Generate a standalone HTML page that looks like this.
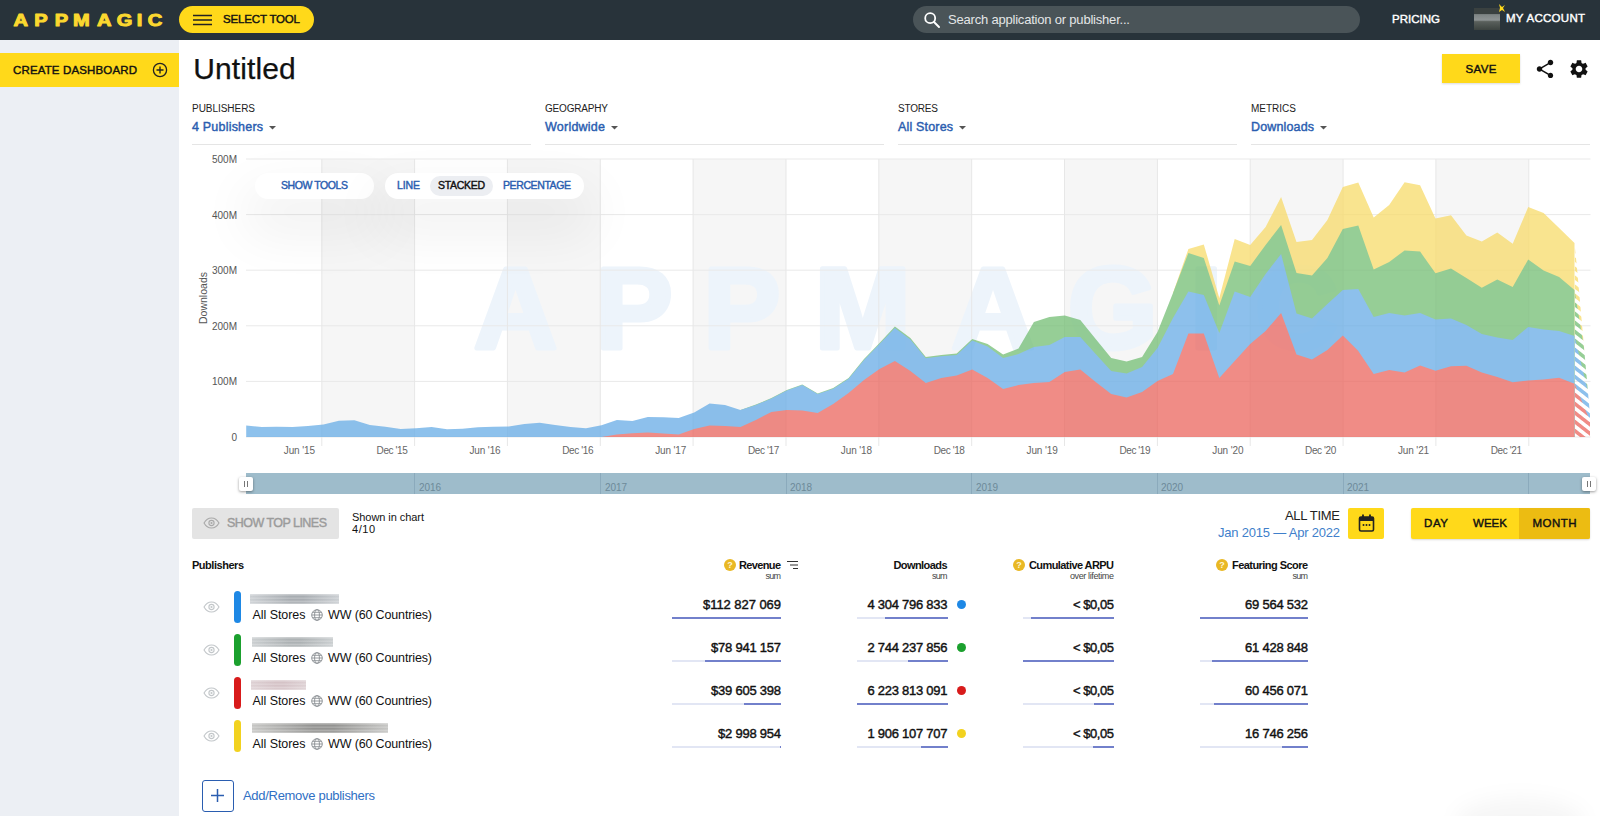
<!DOCTYPE html>
<html lang="en"><head><meta charset="utf-8"><title>AppMagic - Untitled dashboard</title>
<style>
html,body{margin:0;padding:0}
body{width:1600px;height:816px;position:relative;overflow:hidden;background:#fff;font-family:"Liberation Sans",Arial,sans-serif;color:#111}
.t{position:absolute;white-space:nowrap}
.abs{position:absolute}
header{position:absolute;left:0;top:0;width:1600px;height:39.500px;background:#28333a}
aside{position:absolute;left:0;top:39.500px;width:179px;height:776.500px;background:#eceff4}
svg{position:absolute;overflow:visible}
</style></head>
<body>
<header></header>
<svg style="left:0;top:0" width="180" height="40" viewBox="0 0 180 40"><text transform="scale(1.19 1)" y="26.100" x="11.43 28.78 46.09 61.34 81.51 98.06 114.91 124.20" font-family="Liberation Sans, Arial, sans-serif" font-weight="700" font-size="16.9" fill="#fbd82f" stroke="#fbd82f" stroke-width="1" stroke-linejoin="round">APPMAGIC</text></svg>
<div class="abs" style="left:179px;top:6px;width:135px;height:27px;border-radius:14px;background:#ffd91a"></div>
<svg style="left:193px;top:14px" width="20" height="12" viewBox="0 0 20 12"><path d="M0 1.5h19M0 6h19M0 10.5h19" stroke="#222" stroke-width="1.6" fill="none"/></svg>
<div class="t" style="font-size:11.5px;line-height:15px;top:12.10px;color:#111;letter-spacing:-0.162px;left:223.00px;-webkit-text-stroke:0.42px #111;">SELECT TOOL</div>
<div class="abs" style="left:912.500px;top:5.500px;width:447.500px;height:27.500px;border-radius:14px;background:#4a5458"></div>
<svg style="left:923px;top:11px" width="18" height="18" viewBox="0 0 18 18"><circle cx="7.2" cy="7.2" r="5" stroke="#fff" stroke-width="1.8" fill="none"/><path d="M11 11l5 5" stroke="#fff" stroke-width="2" stroke-linecap="round"/></svg>
<div class="t" style="font-size:13px;line-height:17px;top:11.00px;color:#e4e6e7;letter-spacing:-0.201px;left:948.00px;">Search application or publisher...</div>
<div class="t" style="font-size:11.5px;line-height:15px;top:12.00px;color:#fff;letter-spacing:0.013px;left:1392.00px;-webkit-text-stroke:0.42px #fff;">PRICING</div>
<div class="abs" style="left:1474px;top:8px;width:26px;height:22px;background:linear-gradient(#3a4140 0,#3a4140 25%,#7d8484 30%,#8e9494 55%,#5a605c 62%,#3c4340 100%)"></div>
<svg style="left:1498px;top:4px" width="8" height="9" viewBox="0 0 8 9"><path d="M1 0l3 3 3-2-2 3 2 4-3-2-3 2 1-4z" fill="#ffd91a"/></svg>
<div class="t" style="font-size:11.5px;line-height:15px;top:11.00px;color:#fff;letter-spacing:0.282px;left:1506.00px;-webkit-text-stroke:0.42px #fff;">MY ACCOUNT</div>
<aside></aside>
<div class="abs" style="left:0;top:53px;width:179px;height:34px;background:#ffd91a"></div>
<div class="t" style="font-size:11.5px;line-height:15px;top:63.00px;color:#111;letter-spacing:0.144px;left:13.00px;-webkit-text-stroke:0.42px #111;">CREATE DASHBOARD</div>
<svg style="left:152px;top:62px" width="16" height="16" viewBox="0 0 16 16"><circle cx="8" cy="8" r="6.6" stroke="#222" stroke-width="1.3" fill="none"/><path d="M8 4.5v7M4.5 8h7" stroke="#222" stroke-width="1.4"/></svg>
<div class="t" style="font-size:30px;line-height:36px;top:50.50px;color:#111;letter-spacing:0.083px;left:193.30px;-webkit-text-stroke:.25px #111;">Untitled</div>
<div class="abs" style="left:1442px;top:54px;width:78px;height:29px;background:#ffd91a;box-shadow:0 1px 2px rgba(0,0,0,.15)"></div>
<div class="t" style="font-size:11.5px;line-height:15px;top:61.50px;color:#111;letter-spacing:0.390px;left:1481.00px;transform:translateX(-50%);margin-left:0.20px;-webkit-text-stroke:0.42px #111;">SAVE</div>
<svg style="left:1534px;top:58px" width="22" height="22" viewBox="0 0 24 24"><path fill="#111" d="M18 16.08c-.76 0-1.44.3-1.96.77L8.91 12.7c.05-.23.09-.46.09-.7s-.04-.47-.09-.7l7.05-4.11c.54.5 1.25.81 2.04.81 1.66 0 3-1.34 3-3s-1.340-3-3-3-3 1.340-3 3c0 .24.04.47.09.7L8.040 9.810C7.500 9.310 6.790 9 6 9c-1.660 0-3 1.340-3 3s1.340 3 3 3c.79 0 1.500-.31 2.040-.81l7.120 4.160c-.05.210-.08.430-.08.650 0 1.610 1.310 2.920 2.920 2.920s2.920-1.310 2.920-2.920-1.310-2.920-2.920-2.920z"/></svg>
<svg style="left:1568.400px;top:58.400px" width="22" height="22" viewBox="0 0 24 24"><path fill="#111" d="M19.14 12.94c.04-.3.06-.61.06-.94 0-.32-.02-.64-.07-.94l2.030-1.580c.18-.14.23-.41.12-.61l-1.920-3.320c-.12-.22-.37-.29-.59-.22l-2.390.96c-.5-.38-1.030-.7-1.620-.94l-.36-2.540c-.04-.24-.24-.41-.48-.41h-3.840c-.24 0-.43.17-.47.41l-.36 2.540c-.59.24-1.130.57-1.620.94l-2.390-.96c-.22-.08-.47 0-.59.22L2.740 8.870c-.12.210-.08.470.12.610l2.030 1.580c-.05.300-.09.630-.09.940s.02.640.07.940l-2.030 1.580c-.18.140-.23.410-.12.610l1.920 3.320c.12.220.37.290.59.220l2.390-.96c.5.380 1.030.7 1.620.94l.36 2.540c.05.240.24.410.48.410h3.840c.24 0 .44-.17.47-.41l.36-2.540c.59-.24 1.130-.56 1.620-.94l2.390.96c.22.08.47 0 .59-.22l1.920-3.320c.12-.22.07-.47-.12-.61l-2.010-1.580zM12 15.600c-1.980 0-3.600-1.620-3.600-3.600s1.620-3.600 3.600-3.600 3.600 1.620 3.600 3.600-1.620 3.600-3.600 3.600z"/></svg>
<div class="t" style="font-size:10px;line-height:13px;top:102.00px;color:#222;letter-spacing:-0.040px;left:192.00px;">PUBLISHERS</div>
<div class="t" style="font-size:12.5px;line-height:16px;top:118.50px;color:#2a5db0;letter-spacing:0.201px;left:192.00px;-webkit-text-stroke:0.42px #2a5db0;">4 Publishers</div>
<svg style="left:268.5px;top:126.300px" width="7" height="4" viewBox="0 0 7 4"><path d="M0 0h7L3.500 3.600z" fill="#555"/></svg>
<div class="abs" style="left:192px;top:144px;width:339px;height:1px;background:#e5e5e5"></div>
<div class="t" style="font-size:10px;line-height:13px;top:102.00px;color:#222;letter-spacing:-0.182px;left:545.00px;">GEOGRAPHY</div>
<div class="t" style="font-size:12.5px;line-height:16px;top:118.50px;color:#2a5db0;letter-spacing:0.234px;left:545.00px;-webkit-text-stroke:0.42px #2a5db0;">Worldwide</div>
<svg style="left:610.5px;top:126.300px" width="7" height="4" viewBox="0 0 7 4"><path d="M0 0h7L3.500 3.600z" fill="#555"/></svg>
<div class="abs" style="left:545px;top:144px;width:339px;height:1px;background:#e5e5e5"></div>
<div class="t" style="font-size:10px;line-height:13px;top:102.00px;color:#222;letter-spacing:-0.188px;left:898.00px;">STORES</div>
<div class="t" style="font-size:12.5px;line-height:16px;top:118.50px;color:#2a5db0;letter-spacing:0.167px;left:898.00px;-webkit-text-stroke:0.42px #2a5db0;">All Stores</div>
<svg style="left:958.5px;top:126.300px" width="7" height="4" viewBox="0 0 7 4"><path d="M0 0h7L3.500 3.600z" fill="#555"/></svg>
<div class="abs" style="left:898px;top:144px;width:339px;height:1px;background:#e5e5e5"></div>
<div class="t" style="font-size:10px;line-height:13px;top:102.00px;color:#222;letter-spacing:-0.000px;left:1251.00px;">METRICS</div>
<div class="t" style="font-size:12.5px;line-height:16px;top:118.50px;color:#2a5db0;letter-spacing:0.145px;left:1251.00px;-webkit-text-stroke:0.42px #2a5db0;">Downloads</div>
<svg style="left:1319.5px;top:126.300px" width="7" height="4" viewBox="0 0 7 4"><path d="M0 0h7L3.500 3.600z" fill="#555"/></svg>
<div class="abs" style="left:1251px;top:144px;width:339px;height:1px;background:#e5e5e5"></div>
<svg style="left:0;top:0" width="1600" height="816" viewBox="0 0 1600 816">
<defs>
<pattern id="hatch" width="7.1" height="7.1" patternUnits="userSpaceOnUse" patternTransform="rotate(38)"><rect width="7.1" height="3.55" fill="#fff"/></pattern>
<mask id="hm"><path d="M1574.800 243L1590 415V437H1574.800Z" fill="url(#hatch)"/></mask>
</defs>
<rect x="321.8" y="159" width="92.85" height="278" fill="#f6f6f6"/>
<rect x="507.4" y="159" width="92.85" height="278" fill="#f6f6f6"/>
<rect x="693.1" y="159" width="92.85" height="278" fill="#f6f6f6"/>
<rect x="878.8" y="159" width="92.85" height="278" fill="#f6f6f6"/>
<rect x="1064.5" y="159" width="92.85" height="278" fill="#f6f6f6"/>
<rect x="1250.2" y="159" width="92.85" height="278" fill="#f6f6f6"/>
<rect x="1435.9" y="159" width="92.85" height="278" fill="#f6f6f6"/>
<text y="348.100" x="474.1 595.7 703.5 814.7 951.6 1067.9 1190.2 1254.9" font-family="Liberation Sans, Arial, sans-serif" font-weight="700" font-size="115" fill="#edf4fb" stroke="#edf4fb" stroke-width="5" stroke-linejoin="round">APPMAGIC</text>
<path d="M246 159.0H1590.500" stroke="#e9e9e9" stroke-width="1"/>
<path d="M246 214.6H1590.500" stroke="#e9e9e9" stroke-width="1"/>
<path d="M246 270.2H1590.500" stroke="#e9e9e9" stroke-width="1"/>
<path d="M246 325.8H1590.500" stroke="#e9e9e9" stroke-width="1"/>
<path d="M246 381.4H1590.500" stroke="#e9e9e9" stroke-width="1"/>
<path d="M246 437.0H1590.500" stroke="#e9e9e9" stroke-width="1"/>
<path d="M321.8 159V446" stroke="#e7e7e7" stroke-width="1"/>
<path d="M414.6 159V446" stroke="#e7e7e7" stroke-width="1"/>
<path d="M507.4 159V446" stroke="#e7e7e7" stroke-width="1"/>
<path d="M600.3 159V446" stroke="#e7e7e7" stroke-width="1"/>
<path d="M693.1 159V446" stroke="#e7e7e7" stroke-width="1"/>
<path d="M786.0 159V446" stroke="#e7e7e7" stroke-width="1"/>
<path d="M878.8 159V446" stroke="#e7e7e7" stroke-width="1"/>
<path d="M971.7 159V446" stroke="#e7e7e7" stroke-width="1"/>
<path d="M1064.5 159V446" stroke="#e7e7e7" stroke-width="1"/>
<path d="M1157.4 159V446" stroke="#e7e7e7" stroke-width="1"/>
<path d="M1250.2 159V446" stroke="#e7e7e7" stroke-width="1"/>
<path d="M1343.1 159V446" stroke="#e7e7e7" stroke-width="1"/>
<path d="M1435.9 159V446" stroke="#e7e7e7" stroke-width="1"/>
<path d="M1528.8 159V446" stroke="#e7e7e7" stroke-width="1"/>
<g opacity="0.75">
<path d="M1173.0,293.0 L1188.4,249.0 L1203.8,244.4 L1219.3,298.0 L1234.7,239.0 L1250.2,245.0 L1265.6,227.0 L1281.1,197.0 L1296.5,242.0 L1312.0,240.0 L1327.4,220.0 L1342.8,187.0 L1358.3,182.4 L1373.7,217.6 L1389.2,205.0 L1404.6,182.2 L1420.1,185.3 L1435.5,218.5 L1451.0,215.3 L1466.4,235.5 L1481.8,241.5 L1497.3,232.5 L1512.7,243.8 L1528.2,207.0 L1543.6,213.0 L1559.1,228.0 L1574.5,243.0 L1574.5,437.0 L1173.0,437.0Z" fill="#f8db6a"/>
<path d="M740.5,410.0 L755.9,404.6 L771.4,398.0 L786.8,390.0 L802.3,384.4 L817.7,393.4 L833.2,388.0 L848.6,378.0 L864.0,359.0 L879.5,343.0 L894.9,326.6 L910.4,338.0 L925.8,357.0 L941.3,355.0 L956.7,353.6 L972.2,339.0 L987.6,344.0 L1003.1,354.4 L1018.5,348.6 L1033.9,322.0 L1049.4,317.0 L1064.8,315.4 L1080.3,320.0 L1095.7,339.0 L1111.2,358.0 L1126.6,361.4 L1142.1,357.0 L1157.5,332.0 L1173.0,293.0 L1188.4,253.0 L1203.8,258.0 L1219.3,305.5 L1234.7,261.6 L1250.2,266.0 L1265.6,245.0 L1281.1,225.0 L1296.5,273.0 L1312.0,275.4 L1327.4,258.0 L1342.8,229.0 L1358.3,225.6 L1373.7,269.6 L1389.2,262.0 L1404.6,250.4 L1420.1,251.6 L1435.5,273.2 L1451.0,268.6 L1466.4,278.0 L1481.8,287.7 L1497.3,279.4 L1512.7,287.0 L1528.2,259.4 L1543.6,270.6 L1559.1,277.0 L1574.5,290.0 L1574.5,437.0 L740.5,437.0Z" fill="#74be74"/>
<path d="M246.2,425.5 L261.7,427.0 L277.1,426.8 L292.6,427.0 L308.0,426.0 L323.5,424.5 L338.9,420.8 L354.4,420.2 L369.8,425.0 L385.3,426.8 L400.7,429.0 L416.1,428.2 L431.6,427.0 L447.0,429.2 L462.5,428.8 L477.9,427.2 L493.4,426.8 L508.8,426.5 L524.3,424.0 L539.7,422.8 L555.1,425.0 L570.6,427.0 L586.0,428.3 L601.5,425.2 L616.9,420.0 L632.4,421.0 L647.8,417.0 L663.3,417.2 L678.7,418.0 L694.2,412.4 L709.6,403.4 L725.0,405.0 L740.5,410.0 L755.9,405.0 L771.4,398.4 L786.8,390.5 L802.3,385.0 L817.7,394.0 L833.2,388.7 L848.6,378.8 L864.0,360.0 L879.5,344.0 L894.9,328.0 L910.4,339.4 L925.8,358.2 L941.3,356.2 L956.7,355.0 L972.2,340.4 L987.6,346.4 L1003.1,358.0 L1018.5,354.0 L1033.9,347.0 L1049.4,345.0 L1064.8,337.0 L1080.3,337.0 L1095.7,354.0 L1111.2,371.0 L1126.6,373.6 L1142.1,367.0 L1157.5,348.0 L1173.0,318.0 L1188.4,291.5 L1203.8,295.0 L1219.3,333.0 L1234.7,291.4 L1250.2,297.0 L1265.6,274.0 L1281.1,254.0 L1296.5,313.5 L1312.0,318.5 L1327.4,304.0 L1342.8,290.0 L1358.3,289.0 L1373.7,317.0 L1389.2,313.0 L1404.6,315.5 L1420.1,313.0 L1435.5,319.5 L1451.0,318.5 L1466.4,325.0 L1481.8,334.0 L1497.3,337.5 L1512.7,340.0 L1528.2,327.0 L1543.6,329.4 L1559.1,331.0 L1574.5,336.0 L1574.5,437.0 L246.2,437.0Z" fill="#67ace6"/>
<path d="M601.5,437.0 L616.9,434.4 L632.4,433.2 L647.8,432.6 L663.3,433.6 L678.7,434.4 L694.2,429.0 L709.6,425.4 L725.0,426.0 L740.5,427.0 L755.9,420.0 L771.4,412.0 L786.8,410.0 L802.3,410.4 L817.7,413.0 L833.2,404.0 L848.6,393.0 L864.0,380.0 L879.5,369.0 L894.9,361.0 L910.4,371.0 L925.8,383.0 L941.3,378.0 L956.7,375.6 L972.2,369.4 L987.6,378.0 L1003.1,389.0 L1018.5,385.0 L1033.9,383.0 L1049.4,382.0 L1064.8,372.0 L1080.3,369.4 L1095.7,382.0 L1111.2,394.0 L1126.6,397.6 L1142.1,392.0 L1157.5,381.0 L1173.0,374.0 L1188.4,333.6 L1203.8,333.6 L1219.3,378.0 L1234.7,361.0 L1250.2,344.0 L1265.6,331.0 L1281.1,313.0 L1296.5,354.4 L1312.0,359.6 L1327.4,350.0 L1342.8,335.6 L1358.3,351.0 L1373.7,374.0 L1389.2,370.0 L1404.6,372.5 L1420.1,365.4 L1435.5,370.8 L1451.0,366.3 L1466.4,365.8 L1481.8,372.5 L1497.3,377.0 L1512.7,382.2 L1528.2,380.6 L1543.6,379.4 L1559.1,377.8 L1574.5,383.8 L1574.5,437.0 L601.5,437.0Z" fill="#eb665e"/>
</g>
<g opacity="0.75" mask="url(#hm)">
<path d="M1574.5,243.0 L1590.0,370.0 L1590.0,437.0 L1574.5,437.0Z" fill="#f8db6a"/>
<path d="M1574.5,290.0 L1590.0,384.0 L1590.0,437.0 L1574.5,437.0Z" fill="#74be74"/>
<path d="M1574.5,336.0 L1590.0,400.0 L1590.0,437.0 L1574.5,437.0Z" fill="#67ace6"/>
<path d="M1574.5,383.8 L1590.0,421.0 L1590.0,437.0 L1574.5,437.0Z" fill="#eb665e"/>
</g>
</svg>
<div class="t" style="font-size:10px;line-height:13px;top:153.00px;color:#555;right:1363.00px;">500M</div>
<div class="t" style="font-size:10px;line-height:13px;top:208.60px;color:#555;right:1363.00px;">400M</div>
<div class="t" style="font-size:10px;line-height:13px;top:264.20px;color:#555;right:1363.00px;">300M</div>
<div class="t" style="font-size:10px;line-height:13px;top:319.80px;color:#555;right:1363.00px;">200M</div>
<div class="t" style="font-size:10px;line-height:13px;top:375.40px;color:#555;right:1363.00px;">100M</div>
<div class="t" style="font-size:10px;line-height:13px;top:431.00px;color:#555;right:1363.00px;">0</div>
<div class="t" style="left:203px;top:298px;font-size:10.500px;line-height:12px;color:#555;transform:translate(-50%,-50%) rotate(-90deg)">Downloads</div>
<div class="t" style="font-size:10px;line-height:13px;top:444.30px;color:#666;letter-spacing:-0.122px;right:1285.17px;">Jun &#x27;15</div>
<div class="t" style="font-size:10px;line-height:13px;top:444.30px;color:#666;letter-spacing:-0.399px;right:1192.60px;">Dec &#x27;15</div>
<div class="t" style="font-size:10px;line-height:13px;top:444.30px;color:#666;letter-spacing:-0.122px;right:1099.47px;">Jun &#x27;16</div>
<div class="t" style="font-size:10px;line-height:13px;top:444.30px;color:#666;letter-spacing:-0.399px;right:1006.90px;">Dec &#x27;16</div>
<div class="t" style="font-size:10px;line-height:13px;top:444.30px;color:#666;letter-spacing:-0.122px;right:913.77px;">Jun &#x27;17</div>
<div class="t" style="font-size:10px;line-height:13px;top:444.30px;color:#666;letter-spacing:-0.399px;right:821.20px;">Dec &#x27;17</div>
<div class="t" style="font-size:10px;line-height:13px;top:444.30px;color:#666;letter-spacing:-0.122px;right:728.07px;">Jun &#x27;18</div>
<div class="t" style="font-size:10px;line-height:13px;top:444.30px;color:#666;letter-spacing:-0.399px;right:635.50px;">Dec &#x27;18</div>
<div class="t" style="font-size:10px;line-height:13px;top:444.30px;color:#666;letter-spacing:-0.122px;right:542.37px;">Jun &#x27;19</div>
<div class="t" style="font-size:10px;line-height:13px;top:444.30px;color:#666;letter-spacing:-0.399px;right:449.80px;">Dec &#x27;19</div>
<div class="t" style="font-size:10px;line-height:13px;top:444.30px;color:#666;letter-spacing:-0.122px;right:356.67px;">Jun &#x27;20</div>
<div class="t" style="font-size:10px;line-height:13px;top:444.30px;color:#666;letter-spacing:-0.399px;right:264.10px;">Dec &#x27;20</div>
<div class="t" style="font-size:10px;line-height:13px;top:444.30px;color:#666;letter-spacing:-0.122px;right:170.97px;">Jun &#x27;21</div>
<div class="t" style="font-size:10px;line-height:13px;top:444.30px;color:#666;letter-spacing:-0.399px;right:78.40px;">Dec &#x27;21</div>
<div class="abs" style="left:255px;top:172.500px;width:119px;height:26px;border-radius:13px;background:#fff;box-shadow:0 26px 50px 14px rgba(0,0,0,.05)"></div>
<div class="abs" style="left:385px;top:172.500px;width:199px;height:26px;border-radius:13px;background:#fff;box-shadow:0 26px 50px 14px rgba(0,0,0,.05)"></div>
<div class="abs" style="left:430px;top:175.500px;width:63px;height:20px;border-radius:10px;background:#eceef2"></div>
<div class="t" style="font-size:10.5px;line-height:14px;top:177.70px;color:#2a5db0;letter-spacing:-0.422px;left:281.00px;-webkit-text-stroke:0.42px #2a5db0;">SHOW TOOLS</div>
<div class="t" style="font-size:10.5px;line-height:14px;top:177.70px;color:#2a5db0;letter-spacing:-0.115px;left:397.00px;-webkit-text-stroke:0.42px #2a5db0;">LINE</div>
<div class="t" style="font-size:10.5px;line-height:14px;top:177.70px;color:#111;letter-spacing:-0.303px;left:438.00px;-webkit-text-stroke:0.42px #111;">STACKED</div>
<div class="t" style="font-size:10.5px;line-height:14px;top:177.70px;color:#2a5db0;letter-spacing:-0.397px;left:503.00px;-webkit-text-stroke:0.42px #2a5db0;">PERCENTAGE</div>
<div class="abs" style="left:246px;top:473px;width:1344px;height:21px;background:#9ebccb"></div>
<div class="abs" style="left:414.1px;top:473px;width:1px;height:21px;background:rgba(90,125,150,.28)"></div>
<div class="abs" style="left:599.8px;top:473px;width:1px;height:21px;background:rgba(90,125,150,.28)"></div>
<div class="abs" style="left:785.5px;top:473px;width:1px;height:21px;background:rgba(90,125,150,.28)"></div>
<div class="abs" style="left:971.2px;top:473px;width:1px;height:21px;background:rgba(90,125,150,.28)"></div>
<div class="abs" style="left:1156.9px;top:473px;width:1px;height:21px;background:rgba(90,125,150,.28)"></div>
<div class="abs" style="left:1342.6px;top:473px;width:1px;height:21px;background:rgba(90,125,150,.28)"></div>
<div class="abs" style="left:1528.3px;top:473px;width:1px;height:21px;background:rgba(90,125,150,.28)"></div>
<div class="t" style="font-size:10px;line-height:13px;top:481.00px;color:#6d8a99;left:430.00px;transform:translateX(-50%);">2016</div>
<div class="t" style="font-size:10px;line-height:13px;top:481.00px;color:#6d8a99;left:616.00px;transform:translateX(-50%);">2017</div>
<div class="t" style="font-size:10px;line-height:13px;top:481.00px;color:#6d8a99;left:801.00px;transform:translateX(-50%);">2018</div>
<div class="t" style="font-size:10px;line-height:13px;top:481.00px;color:#6d8a99;left:987.00px;transform:translateX(-50%);">2019</div>
<div class="t" style="font-size:10px;line-height:13px;top:481.00px;color:#6d8a99;left:1172.00px;transform:translateX(-50%);">2020</div>
<div class="t" style="font-size:10px;line-height:13px;top:481.00px;color:#6d8a99;left:1358.00px;transform:translateX(-50%);">2021</div>
<div class="abs" style="left:239px;top:477px;width:14px;height:14px;background:#fff;border-radius:2px;box-shadow:0 1px 3px rgba(0,0,0,.4)"></div>
<div class="abs" style="left:244px;top:481px;width:1px;height:6px;background:#777"></div><div class="abs" style="left:247px;top:481px;width:1px;height:6px;background:#777"></div>
<div class="abs" style="left:1582px;top:477px;width:14px;height:14px;background:#fff;border-radius:2px;box-shadow:0 1px 3px rgba(0,0,0,.4)"></div>
<div class="abs" style="left:1587px;top:481px;width:1px;height:6px;background:#777"></div><div class="abs" style="left:1590px;top:481px;width:1px;height:6px;background:#777"></div>
<div class="abs" style="left:192px;top:508px;width:147px;height:31px;background:#e4e4e4;border-radius:2px"></div>
<svg style="left:203px;top:517px" width="17" height="12" viewBox="0 0 17 12"><path d="M1 6C3 2.500 5.500 1 8.500 1S14 2.500 16 6c-2 3.500-4.500 5-7.500 5S3 9.500 1 6z" fill="none" stroke="#a9a9a9" stroke-width="1.100"/><circle cx="8.500" cy="6" r="2.600" fill="none" stroke="#a9a9a9" stroke-width="1.100"/><circle cx="8.500" cy="6" r="1.100" fill="#a9a9a9"/></svg>
<div class="t" style="font-size:12.5px;line-height:16px;top:514.90px;color:#9b9b9b;letter-spacing:-0.537px;left:227.00px;-webkit-text-stroke:0.42px #9b9b9b;">SHOW TOP LINES</div>
<div class="t" style="font-size:11px;line-height:14px;top:510.00px;color:#111;letter-spacing:-0.059px;left:352.00px;">Shown in chart</div>
<div class="t" style="font-size:11px;line-height:14px;top:522.00px;color:#111;letter-spacing:0.530px;left:352.00px;">4/10</div>
<div class="t" style="font-size:13px;line-height:17px;top:507.40px;color:#222;letter-spacing:-0.297px;right:260.30px;">ALL TIME</div>
<div class="t" style="font-size:13px;line-height:17px;top:523.50px;color:#3f7fcb;letter-spacing:-0.209px;right:260.21px;">Jan 2015 — Apr 2022</div>
<div class="abs" style="left:1348px;top:508px;width:36px;height:31px;background:#ffd91a;border-radius:2px"></div>
<svg style="left:1358px;top:514px" width="17" height="19" viewBox="0 0 17 19"><rect x="1.500" y="3" width="14" height="14" rx="1.500" fill="none" stroke="#222" stroke-width="1.600"/><rect x="1.500" y="3" width="14" height="4" fill="#222"/><path d="M5 0.500v4M12 0.500v4" stroke="#222" stroke-width="1.800"/><circle cx="5.500" cy="11" r="1" fill="#222"/><circle cx="8.500" cy="11" r="1" fill="#222"/><circle cx="11.500" cy="11" r="1" fill="#222"/></svg>
<div class="abs" style="left:1411px;top:508px;width:179px;height:31px;background:#ffd91a;border-radius:2px;box-shadow:0 1px 2px rgba(0,0,0,.15)"></div>
<div class="abs" style="left:1519px;top:508px;width:71px;height:31px;background:#ecbc12;border-radius:0 2px 2px 0"></div>
<div class="t" style="font-size:11.5px;line-height:15px;top:515.50px;color:#111;letter-spacing:0.603px;left:1436.00px;transform:translateX(-50%);margin-left:0.30px;-webkit-text-stroke:0.42px #111;">DAY</div>
<div class="t" style="font-size:11.5px;line-height:15px;top:515.50px;color:#111;letter-spacing:0.044px;left:1490.00px;transform:translateX(-50%);margin-left:0.02px;-webkit-text-stroke:0.42px #111;">WEEK</div>
<div class="t" style="font-size:11.5px;line-height:15px;top:515.50px;color:#111;letter-spacing:0.460px;left:1554.50px;transform:translateX(-50%);margin-left:0.23px;-webkit-text-stroke:0.42px #111;">MONTH</div>
<div class="t" style="font-size:11px;line-height:14px;top:558.00px;color:#111;font-weight:700;letter-spacing:-0.471px;left:192.00px;">Publishers</div>
<svg style="left:723.5px;top:559px" width="12" height="12" viewBox="0 0 12 12"><circle cx="6" cy="6" r="6" fill="#e9b824"/><text x="6" y="9.300" text-anchor="middle" font-family="Liberation Sans, Arial, sans-serif" font-size="9" font-weight="700" fill="#fff6d5">?</text></svg>
<div class="t" style="font-size:11px;line-height:14px;top:558.00px;color:#111;font-weight:700;letter-spacing:-0.642px;right:819.64px;">Revenue</div>
<div class="t" style="font-size:9px;line-height:12px;top:570.20px;color:#444;letter-spacing:-0.751px;right:819.75px;">sum</div>
<svg style="left:787px;top:560px" width="12" height="10" viewBox="0 0 12 10"><path d="M0 1.500h11M3 5h8M6 8.500h5" stroke="#333" stroke-width="1.200" fill="none"/></svg>
<div class="t" style="font-size:11px;line-height:14px;top:558.00px;color:#111;font-weight:700;letter-spacing:-0.584px;right:653.08px;">Downloads</div>
<div class="t" style="font-size:9px;line-height:12px;top:570.20px;color:#444;letter-spacing:-0.751px;right:653.25px;">sum</div>
<svg style="left:1012.5px;top:559px" width="12" height="12" viewBox="0 0 12 12"><circle cx="6" cy="6" r="6" fill="#e9b824"/><text x="6" y="9.300" text-anchor="middle" font-family="Liberation Sans, Arial, sans-serif" font-size="9" font-weight="700" fill="#fff6d5">?</text></svg>
<div class="t" style="font-size:11px;line-height:14px;top:558.00px;color:#111;font-weight:700;letter-spacing:-0.579px;right:486.58px;">Cumulative ARPU</div>
<div class="t" style="font-size:9px;line-height:12px;top:570.20px;color:#444;letter-spacing:-0.376px;right:486.38px;">over lifetime</div>
<svg style="left:1215.5px;top:559px" width="12" height="12" viewBox="0 0 12 12"><circle cx="6" cy="6" r="6" fill="#e9b824"/><text x="6" y="9.300" text-anchor="middle" font-family="Liberation Sans, Arial, sans-serif" font-size="9" font-weight="700" fill="#fff6d5">?</text></svg>
<div class="t" style="font-size:11px;line-height:14px;top:558.00px;color:#111;font-weight:700;letter-spacing:-0.553px;right:292.55px;">Featuring Score</div>
<div class="t" style="font-size:9px;line-height:12px;top:570.20px;color:#444;letter-spacing:-0.751px;right:292.75px;">sum</div>
<svg style="left:203px;top:601px" width="17" height="12" viewBox="0 0 17 12"><path d="M1 6C3 2.500 5.500 1 8.500 1S14 2.500 16 6c-2 3.500-4.500 5-7.500 5S3 9.500 1 6z" fill="none" stroke="#c3c7ca" stroke-width="1.100"/><circle cx="8.500" cy="6" r="2.600" fill="none" stroke="#c3c7ca" stroke-width="1.100"/><circle cx="8.500" cy="6" r="1.100" fill="#c3c7ca"/></svg>
<div class="abs" style="left:233.500px;top:591px;width:7px;height:32px;border-radius:3.500px;background:#1e88e5"></div>
<div class="abs" style="left:250px;top:593.7px;width:89px;height:10px;background:linear-gradient(to bottom,rgba(255,255,255,.45) 0,rgba(255,255,255,0) 28%,rgba(255,255,255,.28) 42%,rgba(255,255,255,0) 58%,rgba(255,255,255,.3) 74%,rgba(255,255,255,.1) 88%,rgba(255,255,255,.5) 100%),linear-gradient(to right,#c9cdd1,#a4a9ae 45%,#a4a9ae 60%,#c9cdd1);filter:blur(.7px)"></div>
<div class="t" style="font-size:12.5px;line-height:16px;top:607.00px;color:#111;letter-spacing:-0.055px;left:252.50px;">All Stores</div>
<svg style="left:311px;top:609px" width="12" height="12" viewBox="0 0 12 12"><g fill="none" stroke="#8a8f93" stroke-width=".9"><circle cx="6" cy="6" r="5.300"/><ellipse cx="6" cy="6" rx="2.400" ry="5.300"/><path d="M.7 6h10.600M1.500 3.300h9M1.500 8.700h9"/></g></svg>
<div class="t" style="font-size:12.5px;line-height:16px;top:607.00px;color:#111;letter-spacing:-0.142px;left:328.00px;">WW (60 Countries)</div>
<div class="t" style="font-size:13px;line-height:17px;top:595.50px;color:#111;letter-spacing:-0.051px;right:819.05px;-webkit-text-stroke:0.42px #111;">$112 827 069</div>
<div class="abs" style="left:672px;top:617.2px;width:109px;height:1.500px;background:#e2e6f4"></div>
<div class="abs" style="left:672px;top:617.2px;width:109px;height:1.500px;background:#7280cb"></div>
<div class="t" style="font-size:13px;line-height:17px;top:595.50px;color:#111;letter-spacing:-0.261px;right:652.76px;-webkit-text-stroke:0.42px #111;">4 304 796 833</div>
<div class="abs" style="left:856.5px;top:617.2px;width:91px;height:1.500px;background:#e2e6f4"></div>
<div class="abs" style="left:884.5px;top:617.2px;width:63px;height:1.500px;background:#7280cb"></div>
<div class="abs" style="left:956.500px;top:600.1px;width:9px;height:9px;border-radius:50%;background:#1e88e5"></div>
<div class="t" style="font-size:13px;line-height:17px;top:595.50px;color:#111;letter-spacing:-0.456px;right:486.46px;-webkit-text-stroke:0.42px #111;">&lt; $0,05</div>
<div class="abs" style="left:1023px;top:617.2px;width:91px;height:1.500px;background:#e2e6f4"></div>
<div class="abs" style="left:1031px;top:617.2px;width:83px;height:1.500px;background:#7280cb"></div>
<div class="t" style="font-size:13px;line-height:17px;top:595.50px;color:#111;letter-spacing:-0.229px;right:292.23px;-webkit-text-stroke:0.42px #111;">69 564 532</div>
<div class="abs" style="left:1200px;top:617.2px;width:108px;height:1.500px;background:#e2e6f4"></div>
<div class="abs" style="left:1200px;top:617.2px;width:108px;height:1.500px;background:#7280cb"></div>
<svg style="left:203px;top:644px" width="17" height="12" viewBox="0 0 17 12"><path d="M1 6C3 2.500 5.500 1 8.500 1S14 2.500 16 6c-2 3.500-4.500 5-7.500 5S3 9.500 1 6z" fill="none" stroke="#c3c7ca" stroke-width="1.100"/><circle cx="8.500" cy="6" r="2.600" fill="none" stroke="#c3c7ca" stroke-width="1.100"/><circle cx="8.500" cy="6" r="1.100" fill="#c3c7ca"/></svg>
<div class="abs" style="left:233.500px;top:634px;width:7px;height:32px;border-radius:3.500px;background:#1ba02e"></div>
<div class="abs" style="left:251.5px;top:636.7px;width:81.5px;height:10px;background:linear-gradient(to bottom,rgba(255,255,255,.45) 0,rgba(255,255,255,0) 28%,rgba(255,255,255,.28) 42%,rgba(255,255,255,0) 58%,rgba(255,255,255,.3) 74%,rgba(255,255,255,.1) 88%,rgba(255,255,255,.5) 100%),linear-gradient(to right,#c8ccce,#a9aeb0 45%,#a9aeb0 60%,#c8ccce);filter:blur(.7px)"></div>
<div class="t" style="font-size:12.5px;line-height:16px;top:650.00px;color:#111;letter-spacing:-0.055px;left:252.50px;">All Stores</div>
<svg style="left:311px;top:652px" width="12" height="12" viewBox="0 0 12 12"><g fill="none" stroke="#8a8f93" stroke-width=".9"><circle cx="6" cy="6" r="5.300"/><ellipse cx="6" cy="6" rx="2.400" ry="5.300"/><path d="M.7 6h10.600M1.500 3.300h9M1.500 8.700h9"/></g></svg>
<div class="t" style="font-size:12.5px;line-height:16px;top:650.00px;color:#111;letter-spacing:-0.142px;left:328.00px;">WW (60 Countries)</div>
<div class="t" style="font-size:13px;line-height:17px;top:638.50px;color:#111;letter-spacing:-0.230px;right:819.23px;-webkit-text-stroke:0.42px #111;">$78 941 157</div>
<div class="abs" style="left:672px;top:660.2px;width:109px;height:1.500px;background:#e2e6f4"></div>
<div class="abs" style="left:705px;top:660.2px;width:76px;height:1.500px;background:#7280cb"></div>
<div class="t" style="font-size:13px;line-height:17px;top:638.50px;color:#111;letter-spacing:-0.261px;right:652.76px;-webkit-text-stroke:0.42px #111;">2 744 237 856</div>
<div class="abs" style="left:856.5px;top:660.2px;width:91px;height:1.500px;background:#e2e6f4"></div>
<div class="abs" style="left:907.5px;top:660.2px;width:40px;height:1.500px;background:#7280cb"></div>
<div class="abs" style="left:956.500px;top:643.1px;width:9px;height:9px;border-radius:50%;background:#1ba02e"></div>
<div class="t" style="font-size:13px;line-height:17px;top:638.50px;color:#111;letter-spacing:-0.456px;right:486.46px;-webkit-text-stroke:0.42px #111;">&lt; $0,05</div>
<div class="abs" style="left:1023px;top:660.2px;width:91px;height:1.500px;background:#e2e6f4"></div>
<div class="abs" style="left:1023px;top:660.2px;width:91px;height:1.500px;background:#7280cb"></div>
<div class="t" style="font-size:13px;line-height:17px;top:638.50px;color:#111;letter-spacing:-0.229px;right:292.23px;-webkit-text-stroke:0.42px #111;">61 428 848</div>
<div class="abs" style="left:1200px;top:660.2px;width:108px;height:1.500px;background:#e2e6f4"></div>
<div class="abs" style="left:1212px;top:660.2px;width:96px;height:1.500px;background:#7280cb"></div>
<svg style="left:203px;top:687px" width="17" height="12" viewBox="0 0 17 12"><path d="M1 6C3 2.500 5.500 1 8.500 1S14 2.500 16 6c-2 3.500-4.500 5-7.500 5S3 9.500 1 6z" fill="none" stroke="#c3c7ca" stroke-width="1.100"/><circle cx="8.500" cy="6" r="2.600" fill="none" stroke="#c3c7ca" stroke-width="1.100"/><circle cx="8.500" cy="6" r="1.100" fill="#c3c7ca"/></svg>
<div class="abs" style="left:233.500px;top:677px;width:7px;height:32px;border-radius:3.500px;background:#d81b1b"></div>
<div class="abs" style="left:251px;top:679.7px;width:55px;height:10px;background:linear-gradient(to bottom,rgba(255,255,255,.45) 0,rgba(255,255,255,0) 28%,rgba(255,255,255,.28) 42%,rgba(255,255,255,0) 58%,rgba(255,255,255,.3) 74%,rgba(255,255,255,.1) 88%,rgba(255,255,255,.5) 100%),linear-gradient(to right,#dccfd2,#d3c0c4 45%,#d3c0c4 60%,#dccfd2);filter:blur(.7px)"></div>
<div class="t" style="font-size:12.5px;line-height:16px;top:693.00px;color:#111;letter-spacing:-0.055px;left:252.50px;">All Stores</div>
<svg style="left:311px;top:695px" width="12" height="12" viewBox="0 0 12 12"><g fill="none" stroke="#8a8f93" stroke-width=".9"><circle cx="6" cy="6" r="5.300"/><ellipse cx="6" cy="6" rx="2.400" ry="5.300"/><path d="M.7 6h10.600M1.500 3.300h9M1.500 8.700h9"/></g></svg>
<div class="t" style="font-size:12.5px;line-height:16px;top:693.00px;color:#111;letter-spacing:-0.142px;left:328.00px;">WW (60 Countries)</div>
<div class="t" style="font-size:13px;line-height:17px;top:681.50px;color:#111;letter-spacing:-0.230px;right:819.23px;-webkit-text-stroke:0.42px #111;">$39 605 398</div>
<div class="abs" style="left:672px;top:703.2px;width:109px;height:1.500px;background:#e2e6f4"></div>
<div class="abs" style="left:744px;top:703.2px;width:37px;height:1.500px;background:#7280cb"></div>
<div class="t" style="font-size:13px;line-height:17px;top:681.50px;color:#111;letter-spacing:-0.261px;right:652.76px;-webkit-text-stroke:0.42px #111;">6 223 813 091</div>
<div class="abs" style="left:856.5px;top:703.2px;width:91px;height:1.500px;background:#e2e6f4"></div>
<div class="abs" style="left:856.5px;top:703.2px;width:91px;height:1.500px;background:#7280cb"></div>
<div class="abs" style="left:956.500px;top:686.1px;width:9px;height:9px;border-radius:50%;background:#d81b1b"></div>
<div class="t" style="font-size:13px;line-height:17px;top:681.50px;color:#111;letter-spacing:-0.456px;right:486.46px;-webkit-text-stroke:0.42px #111;">&lt; $0,05</div>
<div class="abs" style="left:1023px;top:703.2px;width:91px;height:1.500px;background:#e2e6f4"></div>
<div class="abs" style="left:1094px;top:703.2px;width:20px;height:1.500px;background:#7280cb"></div>
<div class="t" style="font-size:13px;line-height:17px;top:681.50px;color:#111;letter-spacing:-0.229px;right:292.23px;-webkit-text-stroke:0.42px #111;">60 456 071</div>
<div class="abs" style="left:1200px;top:703.2px;width:108px;height:1.500px;background:#e2e6f4"></div>
<div class="abs" style="left:1214px;top:703.2px;width:94px;height:1.500px;background:#7280cb"></div>
<svg style="left:203px;top:730px" width="17" height="12" viewBox="0 0 17 12"><path d="M1 6C3 2.500 5.500 1 8.500 1S14 2.500 16 6c-2 3.500-4.500 5-7.500 5S3 9.500 1 6z" fill="none" stroke="#c3c7ca" stroke-width="1.100"/><circle cx="8.500" cy="6" r="2.600" fill="none" stroke="#c3c7ca" stroke-width="1.100"/><circle cx="8.500" cy="6" r="1.100" fill="#c3c7ca"/></svg>
<div class="abs" style="left:233.500px;top:720px;width:7px;height:32px;border-radius:3.500px;background:#f2d21f"></div>
<div class="abs" style="left:251.5px;top:722.7px;width:136px;height:10px;background:linear-gradient(to bottom,rgba(255,255,255,.45) 0,rgba(255,255,255,0) 28%,rgba(255,255,255,.28) 42%,rgba(255,255,255,0) 58%,rgba(255,255,255,.3) 74%,rgba(255,255,255,.1) 88%,rgba(255,255,255,.5) 100%),linear-gradient(to right,#c4c4c2,#8e8e8c 45%,#8e8e8c 60%,#c4c4c2);filter:blur(.7px)"></div>
<div class="t" style="font-size:12.5px;line-height:16px;top:736.00px;color:#111;letter-spacing:-0.055px;left:252.50px;">All Stores</div>
<svg style="left:311px;top:738px" width="12" height="12" viewBox="0 0 12 12"><g fill="none" stroke="#8a8f93" stroke-width=".9"><circle cx="6" cy="6" r="5.300"/><ellipse cx="6" cy="6" rx="2.400" ry="5.300"/><path d="M.7 6h10.600M1.500 3.300h9M1.500 8.700h9"/></g></svg>
<div class="t" style="font-size:12.5px;line-height:16px;top:736.00px;color:#111;letter-spacing:-0.142px;left:328.00px;">WW (60 Countries)</div>
<div class="t" style="font-size:13px;line-height:17px;top:724.50px;color:#111;letter-spacing:-0.229px;right:819.23px;-webkit-text-stroke:0.42px #111;">$2 998 954</div>
<div class="abs" style="left:672px;top:746.2px;width:109px;height:1.500px;background:#e2e6f4"></div>
<div class="abs" style="left:779.5px;top:746.2px;width:1.5px;height:1.500px;background:#7280cb"></div>
<div class="t" style="font-size:13px;line-height:17px;top:724.50px;color:#111;letter-spacing:-0.261px;right:652.76px;-webkit-text-stroke:0.42px #111;">1 906 107 707</div>
<div class="abs" style="left:856.5px;top:746.2px;width:91px;height:1.500px;background:#e2e6f4"></div>
<div class="abs" style="left:920.5px;top:746.2px;width:27px;height:1.500px;background:#7280cb"></div>
<div class="abs" style="left:956.500px;top:729.1px;width:9px;height:9px;border-radius:50%;background:#f2d21f"></div>
<div class="t" style="font-size:13px;line-height:17px;top:724.50px;color:#111;letter-spacing:-0.456px;right:486.46px;-webkit-text-stroke:0.42px #111;">&lt; $0,05</div>
<div class="abs" style="left:1023px;top:746.2px;width:91px;height:1.500px;background:#e2e6f4"></div>
<div class="abs" style="left:1093px;top:746.2px;width:21px;height:1.500px;background:#7280cb"></div>
<div class="t" style="font-size:13px;line-height:17px;top:724.50px;color:#111;letter-spacing:-0.229px;right:292.23px;-webkit-text-stroke:0.42px #111;">16 746 256</div>
<div class="abs" style="left:1200px;top:746.2px;width:108px;height:1.500px;background:#e2e6f4"></div>
<div class="abs" style="left:1282px;top:746.2px;width:26px;height:1.500px;background:#7280cb"></div>
<div class="abs" style="left:202px;top:780px;width:30px;height:30px;border:1px solid #2a5db0;border-radius:3px"></div>
<svg style="left:210px;top:788px" width="15" height="15" viewBox="0 0 15 15"><path d="M7.500 1v13M1 7.500h13" stroke="#2a5db0" stroke-width="1.500"/></svg>
<div class="t" style="font-size:13px;line-height:17px;top:786.70px;color:#2f6fc4;letter-spacing:-0.301px;left:243.00px;">Add/Remove publishers</div>
<div class="abs" style="left:1455px;top:798px;width:130px;height:50px;border-radius:50%;background:rgba(0,0,0,.035);filter:blur(10px)"></div>
</body></html>
